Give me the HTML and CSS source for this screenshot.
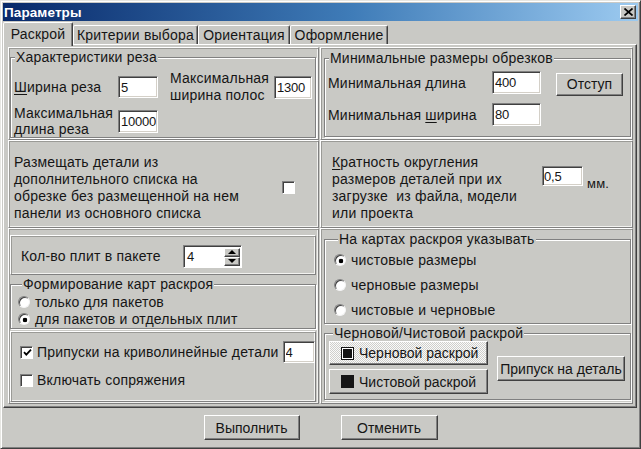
FILE: index.html
```html
<!DOCTYPE html>
<html lang="ru">
<head>
<meta charset="utf-8">
<title>Параметры</title>
<link rel="stylesheet" href="styles.css">
</head>
<body>
<div class="window">
  <div class="titlebar">
    <span class="title">Параметры</span>
    <span class="close"><svg width="9" height="8" viewBox="0 0 9 8"><path d="M0.5 0.5L8.5 7.5M8.5 0.5L0.5 7.5" stroke="#000" stroke-width="1.7" fill="none"/></svg></span>
  </div>
  <div class="tabs">
    <div class="tab active t1">Раскрой</div>
    <div class="tab t2">Критерии выбора</div>
    <div class="tab t3">Ориентация</div>
    <div class="tab t4">Оформление</div>
  </div>
  <div class="tabpanel">
    <div class="sections">
      <div class="panel sec-cut">
        <fieldset class="group g-cut">
          <legend>Характеристики реза</legend>
          <div class="cut-grid">
            <span class="lbl"><u>Ш</u>ирина реза</span>
            <input class="edit e-h22" type="text" value="5">
            <span></span>
            <span class="lbl lh17">Максимальная<br>ширина полос</span>
            <input class="edit e-h23" type="text" value="1300">
            <span class="lbl lh16">Максимальная<br>длина реза</span>
            <input class="edit e-h23" type="text" value="10000">
          </div>
        </fieldset>
      </div>
      <div class="panel sec-min">
        <fieldset class="group g-min">
          <legend>Минимальные размеры обрезков</legend>
          <div class="min-grid">
            <span class="lbl">Минимальная <u>д</u>лина</span>
            <input class="edit e-h23" type="text" value="400">
            <span></span>
            <button class="btn b-offset">Отступ</button>
            <span class="lbl">Минимальная <u>ш</u>ирина</span>
            <input class="edit e-h23" type="text" value="80">
          </div>
        </fieldset>
      </div>
      <div class="panel sec-place">
        <span class="lbl lh17">Размещать детали из<br>дополнительного списка на<br>обрезке без размещенной на нем<br>панели из основного списка</span>
        <span class="check place-check"></span>
      </div>
      <div class="panel sec-round">
        <span class="lbl lh17 round-text"><u>К</u>ратность округления<br>размеров деталей при их<br>загрузке&nbsp; из файла, модели<br>или проекта</span>
        <input class="edit e-round" type="text" value="0,5">
        <span class="mm">мм.</span>
      </div>
      <div class="panel sec-opts">
        <div class="sub sub-pack">
          <span class="lbl pack-label">Кол-во плит в пакете</span>
          <div class="spin">
            <span class="spin-val">4</span>
            <span class="spin-btns">
              <span class="spin-btn"><span class="arr-up"></span></span>
              <span class="spin-btn"><span class="arr-down"></span></span>
            </span>
          </div>
        </div>
        <fieldset class="group g-form">
          <legend>Формирование карт раскроя</legend>
          <div class="radio-row r17"><input type="radio" class="radio" name="form"><span>только для пакетов</span></div>
          <div class="radio-row r17"><input type="radio" class="radio" name="form" checked><span>для пакетов и отдельных плит</span></div>
        </fieldset>
        <div class="sub sub-checks">
          <div class="check-row row-allow">
            <span class="check on"><svg width="9" height="9" viewBox="0 0 9 9"><path d="M1 4.2L3.3 6.6L8 1.6" stroke="#000" stroke-width="1.8" fill="none"/></svg></span>
            <span class="nowrap">Припуски на криволинейные детали</span>
            <input class="edit e-allow" type="text" value="4">
          </div>
          <div class="check-row row-join">
            <span class="check"></span>
            <span class="nowrap">Включать сопряжения</span>
          </div>
        </div>
      </div>
      <div class="panel sec-map">
        <fieldset class="group g-map">
          <legend>На картах раскроя указывать</legend>
          <div class="radio-row r25"><input type="radio" class="radio" name="map" checked><span>чистовые размеры</span></div>
          <div class="radio-row r25"><input type="radio" class="radio" name="map"><span>черновые размеры</span></div>
          <div class="radio-row r25"><input type="radio" class="radio" name="map"><span>чистовые и черновые</span></div>
        </fieldset>
        <fieldset class="group g-mode">
          <legend>Черновой/Чистовой раскрой</legend>
          <div class="mode-wrap">
            <div class="mode-col">
              <button class="btn mode down"><span class="sq sq-ring"></span>Черновой раскрой</button>
              <button class="btn mode m25"><span class="sq"></span>Чистовой раскрой</button>
            </div>
            <button class="btn b-allow">Припуск на деталь</button>
          </div>
        </fieldset>
      </div>
    </div>
  </div>
  <div class="footer">
    <button class="btn b-foot b-run">Выполнить</button>
    <button class="btn b-foot b-cancel">Отменить</button>
  </div>
</div>
</body>
</html>
```

FILE: styles.css
```css
* { box-sizing: border-box; }
html, body { margin: 0; padding: 0; }
body {
  width: 641px;
  height: 449px;
  overflow: hidden;
  background: #c9c9c5;
  font-family: "Liberation Sans", Arial, sans-serif;
  font-size: 14px;
  letter-spacing: 0.2px;
  color: #151515;
}
u { text-decoration: underline; text-underline-offset: 2px; }
.nowrap { white-space: nowrap; }

.window {
  width: 641px;
  height: 449px;
  border: 1px solid;
  border-color: #e6e6e2 #404040 #404040 #e6e6e2;
  box-shadow: inset 1px 1px 0 #fff, inset -1px -1px 0 #808080;
  padding: 2px;
  display: flex;
  flex-direction: column;
}

.titlebar {
  height: 18px;
  flex: none;
  background: linear-gradient(to right, #08296a, #3f7cb8 55%, #9ccaf0);
  display: flex;
  align-items: center;
  padding: 0 2px 0 1px;
}
.title { flex: 1; color: #fff; font-weight: bold; font-size: 13.5px; letter-spacing: 0.1px; }
.close {
  width: 16px;
  height: 14px;
  background: #c9c9c5;
  border: 1px solid;
  border-color: #fff #404040 #404040 #fff;
  box-shadow: inset -1px -1px 0 #808080;
  display: flex;
  align-items: center;
  justify-content: center;
}

.tabs {
  height: 22px;
  margin-top: 1px;
  flex: none;
  display: flex;
  align-items: flex-end;
  position: relative;
  z-index: 1;
}
.tab {
  height: 19px;
  border: 1px solid;
  border-bottom: none;
  border-color: #fff #404040 transparent #fff;
  box-shadow: inset -1px 0 0 #808080;
  border-radius: 2px 2px 0 0;
  display: flex;
  align-items: center;
  justify-content: center;
  background: #c9c9c5;
}
.tab.active { height: 24px; margin-bottom: -2px; padding-bottom: 2px; }
.t1 { width: 70px; }
.t2 { width: 125px; }
.t3 { width: 92px; }
.t4 { width: 98px; }

.tabpanel {
  width: 634px;
  height: 364px;
  flex: none;
  border: 1px solid;
  border-color: #fff #404040 #404040 #fff;
  box-shadow: inset -1px -1px 0 #808080;
  padding: 2px 3px 3px 4px;
}
.sections {
  display: grid;
  grid-template-columns: 311px 313px;
  grid-template-rows: 93px 88px 176px;
  column-gap: 1px;
}

.panel, .sub {
  border: 1px solid;
  border-color: #fff #808080 #808080 #fff;
  box-shadow: inset 1px 1px 0 #9a9a96, inset -1px -1px 0 #f2f2f0;
}

.group {
  margin: 0;
  padding: 0;
  min-width: 0;
  border: 1px solid #808080;
  box-shadow: inset 1px 1px 0 #fff, 1px 1px 0 #fff;
}
.group legend {
  padding: 0 1px;
  margin-left: 4px;
  line-height: 16px;
  background: #c9c9c5;
}

.lbl { line-height: 16px; white-space: nowrap; }
.lh17 { line-height: 17px; }
.lh16 { line-height: 16px; }

.edit {
  font: inherit;
  font-size: 13px;
  letter-spacing: -0.2px;
  color: #151515;
  background: #fff;
  border: 1px solid;
  border-color: #808080 #fff #fff #808080;
  box-shadow: inset 1px 1px 0 #404040, inset -1px -1px 0 #d4d0c8;
  padding: 0 1px 0 2px;
  margin: 0;
  outline: none;
}
.e-h22 { height: 22px; width: 40px; }
.e-h23 { height: 23px; }

.btn {
  font: inherit;
  color: #151515;
  background: #c9c9c5;
  border: 1px solid;
  border-color: #fff #404040 #404040 #fff;
  box-shadow: inset -1px -1px 0 #808080;
  padding: 0;
  margin: 0;
  display: flex;
  align-items: center;
  justify-content: center;
}

/* row 1 left */
.sec-cut { padding: 1px 0 0 1px; }
.g-cut { width: 306px; height: 89px; }
.cut-grid {
  padding: 4px 0 0 3px;
  display: grid;
  grid-template-columns: 104px 40px 12px 104px 38px;
  grid-template-rows: 36px 32px;
  align-items: center;
}
.cut-grid .e-h23 { width: 100%; }

/* row 1 right */
.sec-min { padding: 2px 0 0 3px; }
.g-min { width: 307px; height: 87px; }
.min-grid {
  padding: 0 0 0 3px;
  display: grid;
  grid-template-columns: 164px 49px 15px 67px;
  grid-template-rows: 33px 31px;
  align-items: center;
}
.min-grid .e-h23 { width: 49px; }
.b-offset { height: 23px; width: 67px; margin-top: 3px; }

/* row 2 left */
.sec-place {
  display: flex;
  align-items: center;
  padding: 7px 23px 0 5px;
}
.check {
  width: 13px;
  height: 13px;
  flex: none;
  background: #fff;
  border: 1px solid;
  border-color: #808080 #fff #fff #808080;
  box-shadow: inset 1px 1px 0 #404040;
  display: flex;
  align-items: center;
  justify-content: center;
  padding: 1px 0 0 1px;
}
.place-check { margin-left: auto; }

/* row 2 right */
.sec-round {
  display: flex;
  align-items: flex-start;
  padding: 13px 0 0 11px;
}
.round-text { width: 210px; }
.e-round { width: 41px; height: 20px; margin-top: 12px; padding-left: 1px; }
.mm { margin: 22px 0 0 4px; line-height: 16px; font-size: 13px; }

/* row 3 left */
.sec-opts {
  display: flex;
  flex-direction: column;
  padding: 6px 1px 1px 1px;
}
.sub-pack {
  width: 306px;
  height: 40px;
  flex: none;
  display: flex;
  align-items: center;
  padding: 2px 0 0 10px;
}
.pack-label { width: 162px; }
.spin {
  width: 59px;
  height: 23px;
  background: #fff;
  border: 1px solid;
  border-color: #808080 #fff #fff #808080;
  box-shadow: inset 1px 1px 0 #404040;
  display: flex;
  padding: 2px 1px 1px 2px;
}
.spin-val { flex: 1; line-height: 18px; padding-left: 1px; font-size: 13px; letter-spacing: 0; }
.spin-btns { width: 16px; display: flex; flex-direction: column; }
.spin-btn {
  flex: 1;
  background: #c9c9c5;
  border: 1px solid;
  border-color: #fff #404040 #404040 #fff;
  box-shadow: inset -1px -1px 0 #808080;
  display: flex;
  align-items: center;
  justify-content: center;
}
.arr-up { width: 0; height: 0; border-left: 4px solid transparent; border-right: 4px solid transparent; border-bottom: 4px solid #000; }
.arr-down { width: 0; height: 0; border-left: 4px solid transparent; border-right: 4px solid transparent; border-top: 4px solid #000; }

.g-form { width: 306px; margin-top: 1px; padding: 1px 0 1px 7px; }
.radio-row { display: flex; align-items: center; gap: 5px; white-space: nowrap; }
.r17 { height: 17px; }
.r25 { height: 25px; }
.radio {
  appearance: none;
  -webkit-appearance: none;
  margin: 0;
  width: 12px;
  height: 12px;
  flex: none;
  border-radius: 50%;
  background: #fff;
  border: 1px solid;
  border-color: #808080 #f4f4f4 #f4f4f4 #808080;
  box-shadow: inset 1px 1px 0 #404040;
}
.radio:checked { background: radial-gradient(circle at 6px 6px, #000 0 2px, #fff 2.6px); }

.sub-checks {
  flex: 1;
  width: 306px;
  margin-top: 2px;
  padding: 9px 1px 0 9px;
  display: flex;
  flex-direction: column;
  gap: 8px;
}
.check-row { display: flex; align-items: center; gap: 4px; }
.row-allow { height: 22px; }
.row-join { height: 18px; }
.e-allow { width: 32px; height: 22px; margin-left: auto; flex: none; }

/* row 3 right */
.sec-map { padding: 2px 0 0 3px; display: flex; flex-direction: column; }
.g-map { width: 307px; padding: 0 0 1px 9px; }
.g-mode { width: 307px; margin-top: 1px; padding: 0 5px 5px 4px; }
.mode-wrap { display: flex; align-items: center; }
.mode-col { display: flex; flex-direction: column; gap: 4px; }
.mode {
  width: 159px;
  height: 24px;
  justify-content: flex-start;
  padding-left: 11px;
  gap: 5px;
  white-space: nowrap;
}
.m25 { height: 25px; }
.mode.down {
  background-color: #e8e8e6;
  background-image: conic-gradient(#fafafa 25%, #cfcfcb 0 50%, #fafafa 0 75%, #cfcfcb 0);
  background-size: 2px 2px;
}
.sq { width: 13px; height: 13px; background: #151515; flex: none; }
.sq-ring { box-shadow: inset 0 0 0 1px #151515, inset 0 0 0 2px #fff; }
.b-allow { width: 130px; height: 25px; margin-left: 9px; margin-top: 2px; white-space: nowrap; }

/* footer */
.footer {
  flex: 1;
  display: flex;
  align-items: center;
  justify-content: center;
  gap: 41px;
  padding-top: 1px;
}
.b-foot { height: 25px; }
.b-run { width: 96px; }
.b-cancel { width: 97px; }
```
